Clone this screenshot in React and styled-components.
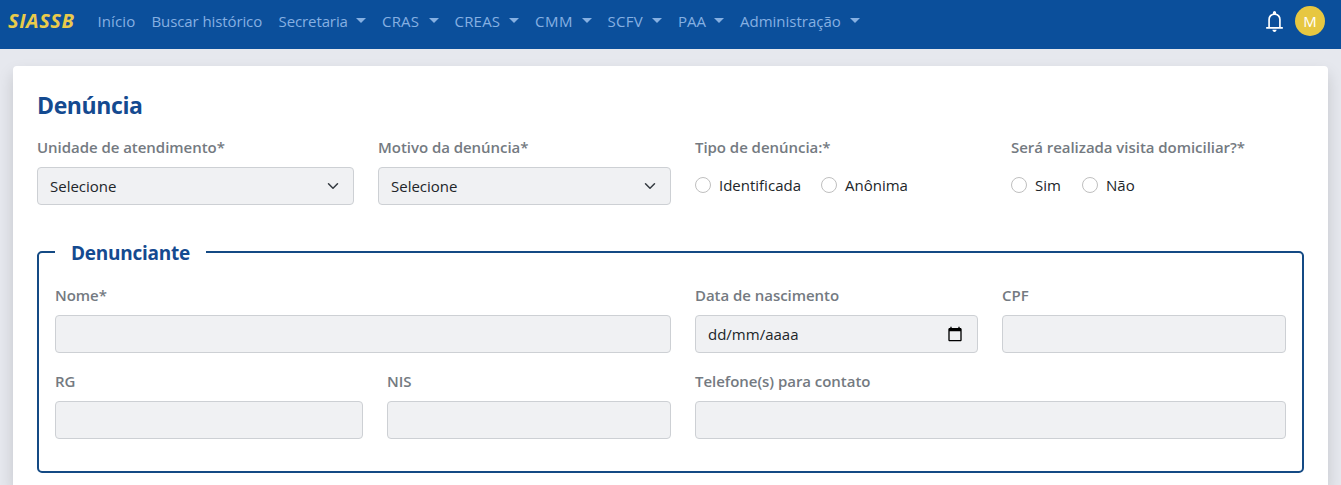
import React from "react";
import styled, { createGlobalStyle } from "styled-components";

const GlobalStyle = createGlobalStyle`
  *, *::before, *::after { box-sizing: border-box; }
  body {
    margin: 0;
    background: #e6e8ee;
    color: #212529;
    font-family: "Open Sans", "Noto Sans", sans-serif;
    font-size: 15px;
    line-height: 24px;
  }
`;

const Page = styled.div`
  display: flex;
  flex-direction: column;
  height: 100vh;
  overflow: hidden;
`;

const Navbar = styled.header`
  display: flex;
  flex: none;
  align-items: center;
  height: 49px;
  padding: 0 16px 7px 8px;
  background: #0b4f9b;
`;

const Brand = styled.a`
  width: 81.5px;
  color: #e9ca4b;
  font-size: 20px;
  font-style: italic;
  font-weight: 700;
  letter-spacing: 0.55px;
  white-space: nowrap;
`;

const Menu = styled.nav`
  display: flex;
  flex: 1;
`;

const MenuLink = styled.a`
  display: flex;
  align-items: center;
  justify-content: space-between;
  width: ${(p) => p.$width}px;
  padding: 0 8px;
  color: #86b0e2;
  white-space: nowrap;
  letter-spacing: ${(p) => p.$track || 0}px;
`;

const Caret = styled.span`
  border-top: 5px solid #86b0e2;
  border-left: 5px solid transparent;
  border-right: 5px solid transparent;
  margin-bottom: 1px;
`;

const Actions = styled.div`
  display: flex;
  align-items: center;
  gap: 8px;
`;

const Avatar = styled.span`
  width: 30px;
  height: 30px;
  border-radius: 50%;
  background: #e7c741;
  color: #fff;
  text-align: center;
  line-height: 31px;
`;

const Card = styled.main`
  flex: 1;
  min-height: 0;
  margin: 17px 13px 0;
  padding: 24px 24px 0;
  border-radius: 4px 4px 0 0;
  background: #fff;
  box-shadow: 0 8px 16px rgba(0, 0, 0, 0.15);
`;

const Title = styled.h1`
  margin: 0 0 14px;
  color: #144a90;
  font-size: 23px;
  font-weight: 700;
  line-height: 31px;
  letter-spacing: -0.4px;
`;

const Grid = styled.div`
  display: grid;
  grid-template-columns: ${(p) => p.$columns};
  column-gap: 24px;
  margin-bottom: ${(p) => p.$below || 0}px;
`;

const Field = styled.div`
  display: flex;
  flex-direction: column;
  gap: 8px;
  min-width: 0;
`;

const Label = styled.label`
  color: #747a81;
  font-weight: 600;
  white-space: nowrap;
  letter-spacing: -0.04px;
`;

const Control = styled.div`
  display: flex;
  align-items: center;
  justify-content: space-between;
  height: 38px;
  padding: 0 ${(p) => p.$end || 12}px 0 12px;
  border: 1px solid #cdd0d4;
  border-radius: 4px;
  background: #f0f1f3;
`;

const Choices = styled.div`
  display: flex;
  height: 36px;
  align-items: center;
`;

const Choice = styled.label`
  display: flex;
  align-items: center;
  gap: 8px;
  width: ${(p) => p.$width}px;
  white-space: nowrap;
`;

const Radio = styled.input`
  appearance: none;
  flex: none;
  width: 16px;
  height: 16px;
  margin: 0;
  border: 1px solid #bfbfbf;
  border-radius: 50%;
  background: #fff;
`;

const Group = styled.fieldset`
  margin: 0;
  min-width: 0;
  height: 235px;
  padding: 17px 16px 0;
  border: 2px solid #144a84;
  border-radius: 5px;
`;

const Legend = styled.legend`
  width: 151px;
  padding: 2px 16px 0;
  color: #144a90;
  font-size: 19px;
  font-weight: 700;
  line-height: 26px;
  letter-spacing: -0.25px;
`;

const Chevron = () => (
  <svg width="16" height="12" viewBox="0 0 16 16" fill="none" stroke="#343a40" strokeWidth="2" strokeLinecap="round" strokeLinejoin="round">
    <path d="m2 5 6 6 6-6" />
  </svg>
);

const Calendar = () => (
  <svg width="16" height="16" viewBox="0 0 24 24" fill="#000">
    <path d="M20 3h-1V1h-2v2H7V1H5v2H4c-1.1 0-2 .9-2 2v16c0 1.1.9 2 2 2h16c1.1 0 2-.9 2-2V5c0-1.1-.9-2-2-2zm0 18H4V8h16v13z" />
  </svg>
);

const Bell = () => (
  <svg width="25" height="25" viewBox="0 0 24 24" fill="#fff">
    <path d="M4 19v-1.6h2V10q0-2.075 1.25-3.687T10.5 4.2v-.7q0-.625.438-1.062T12 2q.625 0 1.063.438T13.5 3.5v.7q2 .5 3.25 2.113T18 10v7.4h2V19H4Zm8 3q-.825 0-1.413-.588T10 20h4q0 .825-.588 1.413T12 22Zm-4.4-4.6h8.8V10q0-1.75-1.275-3.025T12 5.7 8.875 6.975 7.6 10v7.4Z" />
  </svg>
);

const menu = [
  { text: "Início", width: 54, track: 0.1 },
  { text: "Buscar histórico", width: 127, track: -0.1 },
  { text: "Secretaria", width: 103.5, track: -0.1, caret: true },
  { text: "CRAS", width: 72.5, track: 0.2, caret: true },
  { text: "CREAS", width: 80.5, track: 0.2, caret: true },
  { text: "CMM", width: 72.5, track: 0.5, caret: true },
  { text: "SCFV", width: 70.5, track: 0.3, caret: true },
  { text: "PAA", width: 62, caret: true },
  { text: "Administração", width: 136, caret: true },
];

const TextField = ({ label }) => (
  <Field>
    <Label>{label}</Label>
    <Control />
  </Field>
);

const SelectField = ({ label }) => (
  <Field>
    <Label>{label}</Label>
    <Control>
      Selecione
      <Chevron />
    </Control>
  </Field>
);

export default function App() {
  return (
    <Page>
      <GlobalStyle />
      <Navbar>
        <Brand>SIASSB</Brand>
        <Menu>
          {menu.map((m) => (
            <MenuLink key={m.text} $width={m.width} $track={m.track}>
              {m.text}
              {m.caret && <Caret />}
            </MenuLink>
          ))}
        </Menu>
        <Actions>
          <Bell />
          <Avatar>M</Avatar>
        </Actions>
      </Navbar>
      <Card>
        <Title>Denúncia</Title>
        <Grid $columns="317px 293px 292px 1fr" $below={33}>
          <SelectField label="Unidade de atendimento*" />
          <SelectField label="Motivo da denúncia*" />
          <Field>
            <Label>Tipo de denúncia:*</Label>
            <Choices>
              <Choice $width={126}><Radio type="radio" name="tipo" />Identificada</Choice>
              <Choice $width={100}><Radio type="radio" name="tipo" />Anônima</Choice>
            </Choices>
          </Field>
          <Field>
            <Label>Será realizada visita domiciliar?*</Label>
            <Choices>
              <Choice $width={71}><Radio type="radio" name="visita" />Sim</Choice>
              <Choice $width={71}><Radio type="radio" name="visita" />Não</Choice>
            </Choices>
          </Field>
        </Grid>
        <Group>
          <Legend>Denunciante</Legend>
          <Grid $columns="616px 283px 1fr" $below={16}>
            <TextField label="Nome*" />
            <Field>
              <Label>Data de nascimento</Label>
              <Control $end={14}>
                dd/mm/aaaa
                <Calendar />
              </Control>
            </Field>
            <TextField label="CPF" />
          </Grid>
          <Grid $columns="308px 284px 1fr">
            <TextField label="RG" />
            <TextField label="NIS" />
            <TextField label="Telefone(s) para contato" />
          </Grid>
        </Group>
      </Card>
    </Page>
  );
}
